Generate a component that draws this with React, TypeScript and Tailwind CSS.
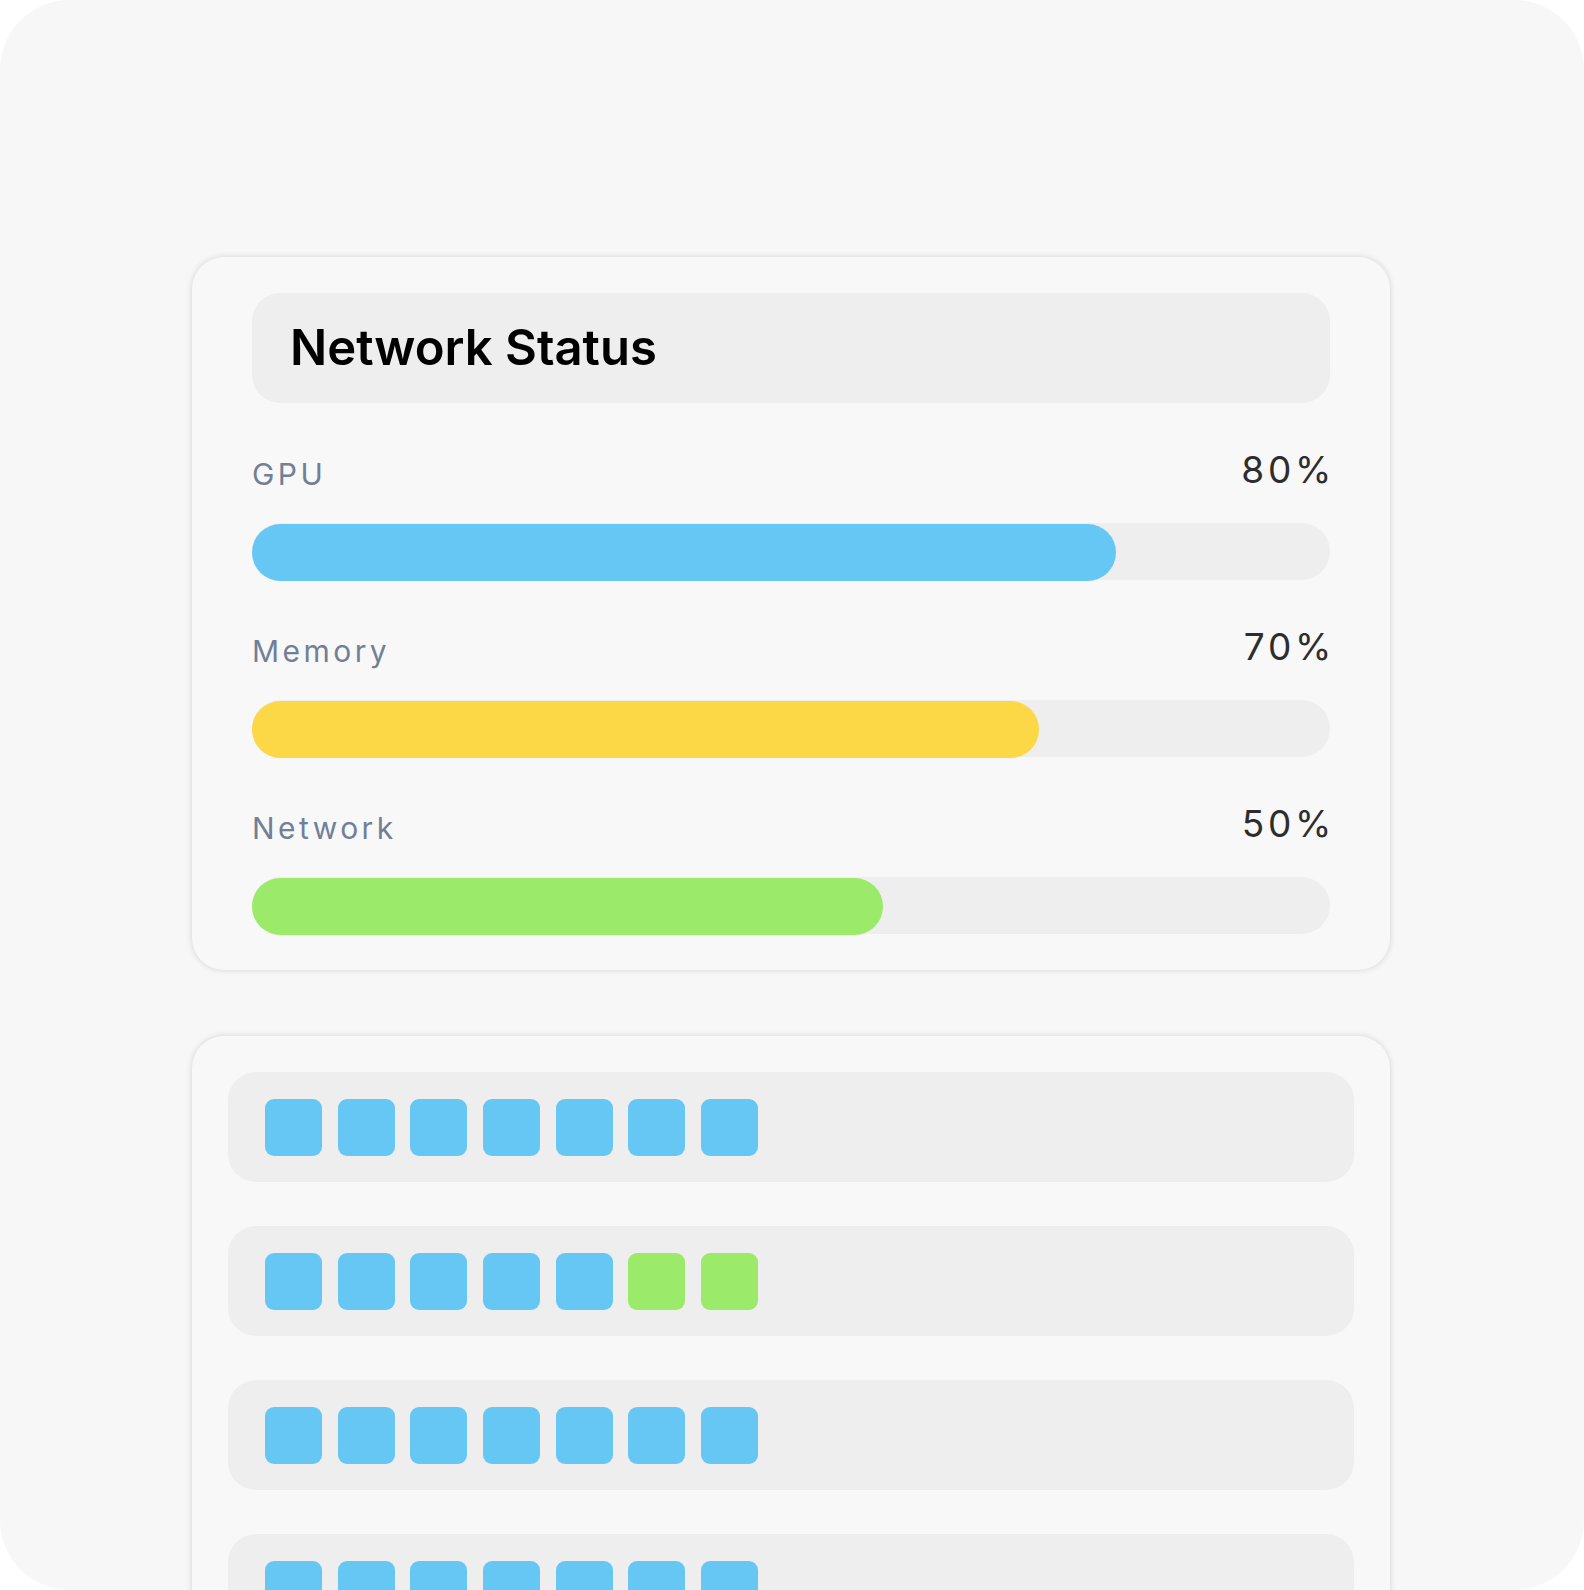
import React from "react"

type Usage = {
  label: string
  value: string
  width: number
  color: string
}

const usage: Usage[] = [
  { label: "GPU", value: "80%", width: 864, color: "bg-[#67c7f4]" },
  { label: "Memory", value: "70%", width: 787, color: "bg-[#fcd846]" },
  { label: "Network", value: "50%", width: 631, color: "bg-[#9cea6a]" },
]

// each strip of cells: "b" = blue, "g" = green
const strips: string[][] = [
  ["b", "b", "b", "b", "b", "b", "b"],
  ["b", "b", "b", "b", "b", "g", "g"],
  ["b", "b", "b", "b", "b", "b", "b"],
  ["b", "b", "b", "b", "b", "b", "b"],
]

const UsageRow = ({ item }: { item: Usage }) => {
  return (
    <div>
      <div className="flex items-end justify-between">
        <span className="text-[30px] leading-[45px] tracking-[0.115em] text-[#718096]">{item.label}</span>
        <span className="-mr-[5px] text-[37px] leading-[54px] tracking-[0.1em] text-[#2d2d2d]">
          {item.value}
        </span>
      </div>
      <div className="mt-[26px] h-[57px] rounded-full bg-[#eeeeee]">
        <div
          className={`h-[57px] translate-y-[1px] rounded-full ${item.color}`}
          style={{ width: item.width }}
        />
      </div>
    </div>
  )
}

const Strip = ({ cells }: { cells: string[] }) => {
  return (
    <div className="flex h-[110px] items-center gap-[15.7px] rounded-[28px] bg-[#eeeeee] pl-[37px]">
      {cells.map((c, i) => (
        <div
          key={i}
          className={
            c === "g"
              ? "h-[57px] w-[57px] rounded-[9px] bg-[#9cea6a]"
              : "h-[57px] w-[57px] rounded-[9px] bg-[#67c7f4]"
          }
        />
      ))}
    </div>
  )
}

export default function App() {
  return (
    <div className="bg-white font-['Inter',sans-serif]">
      <div className="h-[1590px] overflow-hidden rounded-[70px] bg-[#f7f7f7] pt-[257px]">
        <div className="ml-[192px] flex w-[1198px] flex-col gap-[66px]">
          <div className="rounded-[32px] bg-[#f8f8f8] px-[60px] pb-9 pt-9 shadow-[0_0_6px_rgba(0,0,0,0.15)]">
            <div className="flex h-[110px] items-center rounded-[28px] bg-[#eeeeee] pl-[38px]">
              <h1 className="text-[49px] font-semibold text-black">Network Status</h1>
            </div>
            <div className="mt-10 flex flex-col gap-10">
              {usage.map((u) => (
                <UsageRow key={u.label} item={u} />
              ))}
            </div>
          </div>

          <div className="flex flex-col gap-[44px] rounded-[32px] bg-[#f8f8f8] px-9 pb-9 pt-9 shadow-[0_0_6px_rgba(0,0,0,0.15)]">
            {strips.map((s, i) => (
              <Strip key={i} cells={s} />
            ))}
          </div>
        </div>
      </div>
    </div>
  )
}
